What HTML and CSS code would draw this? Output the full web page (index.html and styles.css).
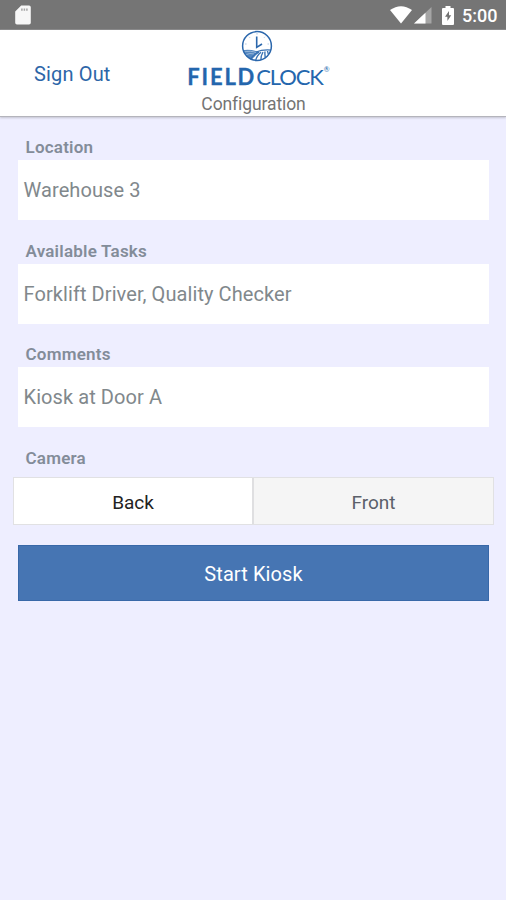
FILE: index.html
```html
<!DOCTYPE html>
<html lang="en">
<head>
<meta charset="utf-8">
<title>FieldClock Configuration</title>
<link rel="stylesheet" href="styles.css">
</head>
<body>
<div class="status">
  <svg class="sd" width="16" height="20" viewBox="0 0 16 20"><path d="M6.2 .5H14a1.8 1.8 0 0 1 1.8 1.8v15.4a1.8 1.8 0 0 1-1.8 1.8H2a1.8 1.8 0 0 1-1.8-1.8V6.5z" fill="#f7f7f7"/><path d="M6.9 3.5v2.3M9.4 3.5v2.3M11.9 3.5v2.3" stroke="#a5a5a5" stroke-width="1.5"/></svg>
  <svg class="wifi" width="22" height="18" viewBox="0 0 22 18"><path d="M0 4Q11-3.6 22 4L11 17.6z" fill="#fff"/></svg>
  <svg class="signal" width="18" height="17" viewBox="0 0 18 17"><path d="M0 16.5 17.5 0v16.5z" fill="#a5a5a5"/><path d="M0 16.5 11.5 5.7v10.8z" fill="#fff"/></svg>
  <svg class="battery" width="12" height="19" viewBox="0 0 12 19"><path d="M3.5 0h5v2H11a1 1 0 0 1 1 1v15a1 1 0 0 1-1 1H1a1 1 0 0 1-1-1V3a1 1 0 0 1 1-1h2.5z" fill="#fff"/><path d="M7 5 3 10.8h2.4V15L9.2 9.2H7z" fill="#737373"/></svg>
  <span class="time">5:00</span>
</div>
<header class="header">
  <a class="signout">Sign Out</a>
  <div class="brand">
    <svg class="mark" width="32" height="32" viewBox="0 0 32 32">
      <defs><clipPath id="disc"><circle cx="16" cy="16" r="14.5"/></clipPath></defs>
      <circle cx="16" cy="16" r="14.5" fill="#fff"/>
      <g clip-path="url(#disc)" fill="none" stroke="#3a73b4">
        <path d="M1 20.2Q10 18.6 18 22.2L9 31H0z" fill="#5487c0" stroke="none"/>
        <path d="M2 22.2Q10 20.2 15 22.6M4 25Q9 22.5 13 24" stroke="#a9c3e0" stroke-width=".8"/>
        <path d="M15 22Q22 19.2 31 20.2" stroke-width="1.2"/>
        <path d="M18 22Q11 25 9 31M20 22.2Q15 26 14.5 32M22 22Q19.5 26 20 32M24 21.5Q23.5 26 25 30M26.5 21Q27 24 28.5 27" stroke-width="1.4"/>
      </g>
      <circle cx="16" cy="16" r="14.4" fill="none" stroke="#2b67ac" stroke-width="1.5"/>
      <path d="M15.7 6.5V17.4L21 14" fill="none" stroke="#2b67ac" stroke-width="1.6"/>
      <path d="M16 3v1.6M4 14h1.6M26.5 14H28M8 6.8l1 1M24 6.8l-1 1" stroke="#a9c3e0" stroke-width=".9"/>
    </svg>
    <div class="logo"><b>FIELD</b><span>CLOCK</span><sup>®</sup></div>
    <div class="title">Configuration</div>
  </div>
</header>
<main>
  <div class="field"><div class="label">Location</div><div class="input">Warehouse 3</div></div>
  <div class="field"><div class="label">Available Tasks</div><div class="input">Forklift Driver, Quality Checker</div></div>
  <div class="field"><div class="label">Comments</div><div class="input">Kiosk at Door A</div></div>
  <div class="label">Camera</div>
  <div class="segments"><div class="segment on">Back</div><div class="segment">Front</div></div>
  <div class="start">Start Kiosk</div>
</main>
</body>
</html>
```
FILE: styles.css
```css
* { box-sizing: border-box; }
body { margin: 0; height: 900px; overflow: hidden; background: #eeeeff; font-family: Roboto, sans-serif; }
svg { display: block; flex: none; }
.status { height: 30px; background: #757575; display: flex; align-items: flex-start; padding: 0 9px 0 15px; border-bottom: 1px solid #858585; }
.sd { margin-top: 5px; }
.wifi { margin: 6px 0 0 auto; }
.signal { margin: 7px 0 0 2px; }
.battery { margin: 6px 0 0 10px; }
.time { margin-left: 8px; color: #fff; font-size: 18px; font-weight: 500; line-height: 32px; width: 35px; white-space: nowrap; }
.header { height: 87px; background: #fff; display: grid; grid-template-columns: 144px 226px 136px; border-bottom: 1px solid #b4b4bc; box-shadow: 0 1px 2px #c3c3d0; }
.signout { color: #2d66a8; font-size: 20px; line-height: 24px; padding: 32px 0 0 34px; letter-spacing: .15px; }
.brand { display: flex; flex-direction: column; align-items: center; }
.logo { display: flex; color: #2466ad; font-family: Lato, sans-serif; font-size: 22px; line-height: 24px; height: 24px; margin: 3px 0 0 3px; }
.logo b { letter-spacing: 1.8px; font-weight: 700; -webkit-text-stroke: .3px #2466ad; }
.logo span { letter-spacing: -1.1px; }
.logo sup { font-size: 7px; line-height: 8px; margin-left: 1px; }
.title { color: #747474; font-size: 17.5px; line-height: 22px; margin: 4px 7px 0 0; letter-spacing: -.1px; }
main { padding: 20px 17px 0 18px; }
.field { height: 103.6px; }
.label { color: #838c99; font-size: 17px; font-weight: 600; line-height: 20px; height: 23px; padding-left: 7.5px; letter-spacing: .22px; }
.input { height: 60px; background: #fff; color: #81888c; font-size: 20px; line-height: 60px; padding-left: 5.5px; letter-spacing: .08px; }
.segments { display: flex; height: 48px; margin: 6.2px -5px 0; border: 1px solid #e1e1e3; }
.segment { flex: 1; background: #f5f5f5; color: #5b606a; font-size: 19px; line-height: 49px; text-align: center; }
.segment.on { flex: 0 0 240px; background: #fff; color: #222; border-right: 2px solid #dfdfe1; }
.start { height: 56px; margin-top: 20px; background: #4675b3; border: 1px solid #3868a8; color: #fff; font-size: 20px; line-height: 57px; text-align: center; letter-spacing: .1px; }
```
